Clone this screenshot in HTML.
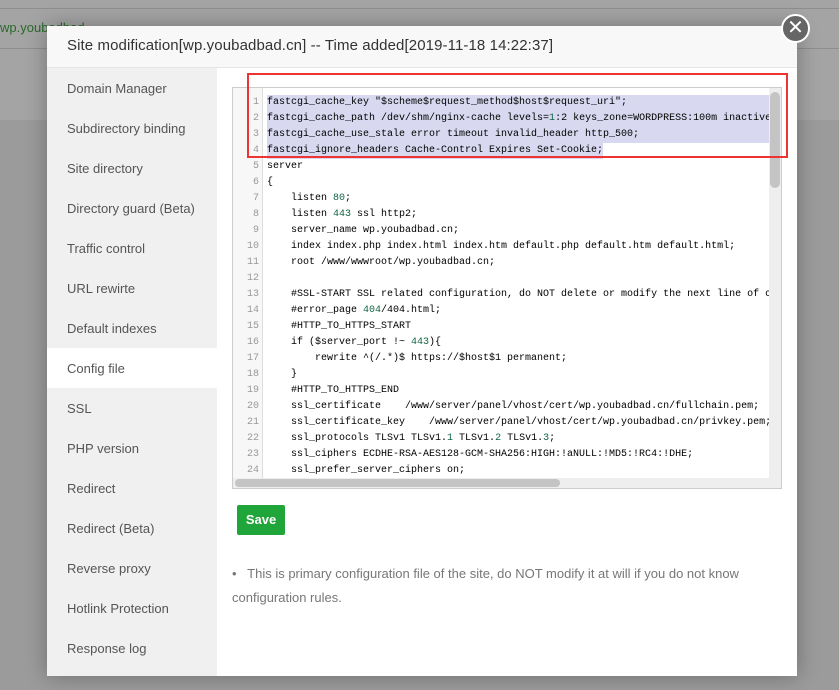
<!DOCTYPE html>
<html><head><meta charset="utf-8"><style>
*{margin:0;padding:0;box-sizing:border-box}
body{width:839px;height:690px;overflow:hidden;background:#9b9b9b;font-family:"Liberation Sans",sans-serif;position:relative}
.top{position:absolute;left:0;top:0;width:839px;height:120px;background:#a4a4a4}
.top .l1{position:absolute;left:0;top:8px;width:839px;height:1px;background:#8e8e8e}
.top .l2{position:absolute;left:0;top:48px;width:839px;height:1px;background:#8e8e8e}
.modal{position:absolute;left:47px;top:26px;width:750px;height:650px;background:#fff;box-shadow:0 0 20px rgba(0,0,0,.3)}
.hd{height:42px;background:#f8f8f8;border-bottom:1px solid #e6e6e6;font-size:15px;letter-spacing:0.1px;color:#333;padding:11px 0 0 20px}
.side{position:absolute;left:0;top:42px;width:170px;bottom:0;background:#f0f0f0}
.side div{height:40px;line-height:42px;padding-left:20px;font-size:13px;color:#555}
.side div.a{background:#fff}
.ed{position:absolute;left:185px;top:61px;width:550px;height:402px;border:1px solid #ccc;background:#fff;overflow:hidden}
.gut{position:absolute;left:0;top:0;width:30px;height:100%;background:#f7f7f7;border-right:1px solid #ddd}
.code{position:absolute;left:0;top:7px;font-family:"Liberation Mono",monospace;font-size:10px;color:#000}
.code div{height:16px;line-height:16px;white-space:pre;position:relative}
.code span.n{display:inline-block;width:26px;text-align:right;color:#999;margin-right:8px}
.code .s{background:#d8d8f0;display:inline-block;width:510px}
.g{color:#164}
.hs{position:absolute;left:0;bottom:0;width:550px;height:10px;background:#eee}
.hs i{position:absolute;left:2px;top:1px;width:325px;height:8px;background:#c4c4c4;border-radius:4px}
.vs{position:absolute;right:0;top:0;width:12px;height:392px;background:#eee}
.vs i{position:absolute;left:1px;top:4px;width:10px;height:96px;background:#c4c4c4;border-radius:5px}
.red{position:absolute;left:200px;top:47px;width:541px;height:85px;border:2px solid #e33}
.btn{position:absolute;left:190px;top:479px;width:48px;height:30px;background:#20a53a;color:#fff;font-size:13px;font-weight:bold;text-align:center;line-height:30px;border-radius:2px}
.tip{position:absolute;left:185px;top:536px;width:540px;font-size:13px;color:#777;line-height:24px}
.x{position:absolute;left:781px;top:14px;width:29px;height:29px;border-radius:50%;background:#666;border:2px solid #fff;color:#fff;text-align:center;line-height:24px;font-size:20px}
</style></head><body>
<div class="top"><div class="l1"></div><div class="l2"></div><span style="position:absolute;left:0;top:20px;color:#2a6b2a;font-size:13px">wp.youbadbad</span></div>
<div class="modal">
<div class="hd">Site modification[wp.youbadbad.cn] -- Time added[2019-11-18 14:22:37]</div>
<div class="side">
<div>Domain Manager</div><div>Subdirectory binding</div><div>Site directory</div><div>Directory guard (Beta)</div><div>Traffic control</div><div>URL rewirte</div><div>Default indexes</div><div class="a">Config file</div><div>SSL</div><div>PHP version</div><div>Redirect</div><div>Redirect (Beta)</div><div>Reverse proxy</div><div>Hotlink Protection</div><div>Response log</div>
</div>
<div class="ed">
<div class="gut"></div>
<div class="code">
<div><span class="n">1</span><span class="s">fastcgi_cache_key "$scheme$request_method$host$request_uri";</span></div>
<div><span class="n">2</span><span class="s">fastcgi_cache_path /dev/shm/nginx-cache levels=<span class="g">1</span>:2 keys_zone=WORDPRESS:100m inactive</span></div>
<div><span class="n">3</span><span class="s">fastcgi_cache_use_stale error timeout invalid_header http_500;</span></div>
<div><span class="n">4</span><span class="s" style="width:336px">fastcgi_ignore_headers Cache-Control Expires Set-Cookie;</span></div>
<div><span class="n">5</span>server</div>
<div><span class="n">6</span>{</div>
<div><span class="n">7</span>    listen <span class="g">80</span>;</div>
<div><span class="n">8</span>    listen <span class="g">443</span> ssl http2;</div>
<div><span class="n">9</span>    server_name wp.youbadbad.cn;</div>
<div><span class="n">10</span>    index index.php index.html index.htm default.php default.htm default.html;</div>
<div><span class="n">11</span>    root /www/wwwroot/wp.youbadbad.cn;</div>
<div><span class="n">12</span></div>
<div><span class="n">13</span>    #SSL-START SSL related configuration, do NOT delete or modify the next line of c</div>
<div><span class="n">14</span>    #error_page <span class="g">404</span>/404.html;</div>
<div><span class="n">15</span>    #HTTP_TO_HTTPS_START</div>
<div><span class="n">16</span>    if ($server_port !~ <span class="g">443</span>){</div>
<div><span class="n">17</span>        rewrite ^(/.*)$ https://$host$1 permanent;</div>
<div><span class="n">18</span>    }</div>
<div><span class="n">19</span>    #HTTP_TO_HTTPS_END</div>
<div><span class="n">20</span>    ssl_certificate    /www/server/panel/vhost/cert/wp.youbadbad.cn/fullchain.pem;</div>
<div><span class="n">21</span>    ssl_certificate_key    /www/server/panel/vhost/cert/wp.youbadbad.cn/privkey.pem;</div>
<div><span class="n">22</span>    ssl_protocols TLSv1 TLSv1.<span class="g">1</span> TLSv1.<span class="g">2</span> TLSv1.<span class="g">3</span>;</div>
<div><span class="n">23</span>    ssl_ciphers ECDHE-RSA-AES128-GCM-SHA256:HIGH:!aNULL:!MD5:!RC4:!DHE;</div>
<div><span class="n">24</span>    ssl_prefer_server_ciphers on;</div>
</div>
<div class="vs"><i></i></div>
<div class="hs"><i></i></div>
</div>
<div class="red"></div>
<div class="btn">Save</div>
<div class="tip">•&nbsp;&nbsp; This is primary configuration file of the site, do NOT modify it at will if you do not know configuration rules.</div>
</div>
<div class="x">✕</div>
</body></html>
